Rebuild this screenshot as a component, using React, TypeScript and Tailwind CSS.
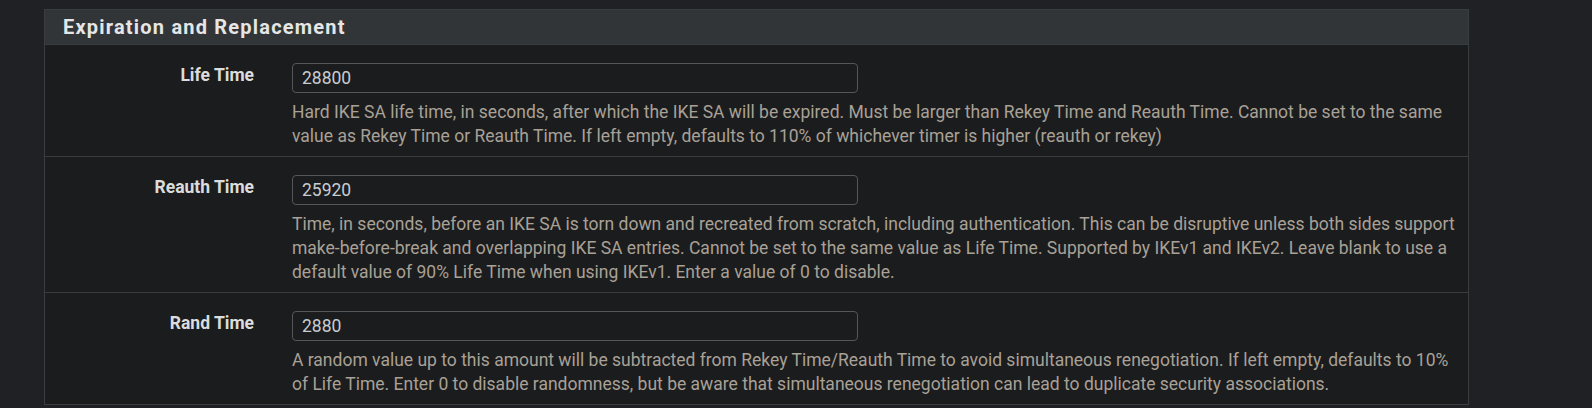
import React from 'react'

interface FieldRow {
  label: string
  value: string
  help: string
}

const ROWS: FieldRow[] = [
  {
    label: 'Life Time',
    value: '28800',
    help: 'Hard IKE SA life time, in seconds, after which the IKE SA will be expired. Must be larger than Rekey Time and Reauth Time. Cannot be set to the same value as Rekey Time or Reauth Time. If left empty, defaults to 110% of whichever timer is higher (reauth or rekey)',
  },
  {
    label: 'Reauth Time',
    value: '25920',
    help: 'Time, in seconds, before an IKE SA is torn down and recreated from scratch, including authentication. This can be disruptive unless both sides support make-before-break and overlapping IKE SA entries. Cannot be set to the same value as Life Time. Supported by IKEv1 and IKEv2. Leave blank to use a default value of 90% Life Time when using IKEv1. Enter a value of 0 to disable.',
  },
  {
    label: 'Rand Time',
    value: '2880',
    help: 'A random value up to this amount will be subtracted from Rekey Time/Reauth Time to avoid simultaneous renegotiation. If left empty, defaults to 10% of Life Time. Enter 0 to disable randomness, but be aware that simultaneous renegotiation can lead to duplicate security associations.',
  },
]

function Row({ row, first }: { row: FieldRow; first: boolean }) {
  return (
    <div className={`flex pt-[18px] pb-[8px] ${first ? '' : 'border-t border-[#3a3d40]'}`}>
      <div className="w-[209px] shrink-0 text-right text-[17.5px] leading-[24px] font-bold text-[#dcdcdc]">
        {row.label}
      </div>
      <div className="ml-[38px] w-[1168px]">
        <input
          readOnly
          value={row.value}
          className="block w-[566px] h-[30px] px-[9px] rounded-[4px] border border-[#54575a] bg-[#1b1c1e] text-[17.5px] text-[#c8ccd0] outline-none"
        />
        <p className="mt-[7px] text-[17.5px] leading-[24px] text-[#a9a196]">{row.help}</p>
      </div>
    </div>
  )
}

export default function App() {
  return (
    <div
      className="min-h-[408px] bg-[#202124] pt-[9px] pl-[44px]"
      style={{ fontFamily: 'Roboto, "Liberation Sans", sans-serif' }}
    >
      <div className="w-[1425px] border border-[#3a3d40] bg-[#1b1c1e]">
        <div className="h-[35px] flex items-center px-[18px] bg-[#323538] border-b border-[#3a3d40]">
          <h2 className="text-[20px] font-bold tracking-[1.2px] text-[#e6e6e6]">Expiration and Replacement</h2>
        </div>
        {ROWS.map((row, i) => (
          <Row key={row.label} row={row} first={i === 0} />
        ))}
      </div>
    </div>
  )
}
